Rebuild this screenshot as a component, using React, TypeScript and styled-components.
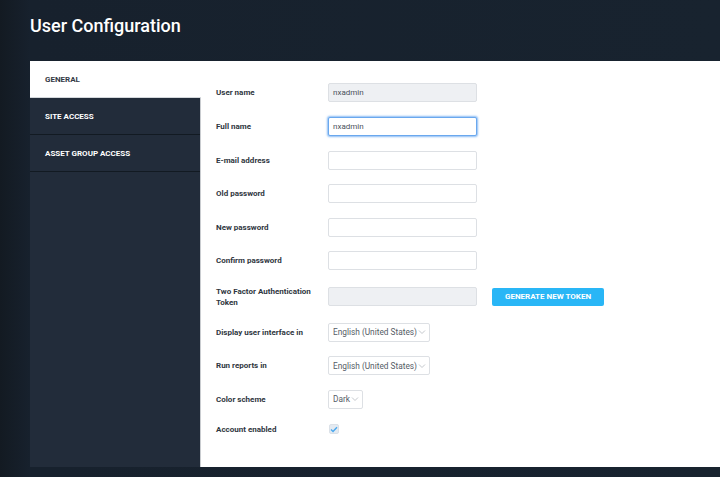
import React from 'react';
import styled, { createGlobalStyle } from 'styled-components';

const GlobalStyle = createGlobalStyle`
  html, body {
    margin: 0;
    padding: 0;
    background: #18222e;
  }
  body {
    font-family: Roboto, "Liberation Sans", sans-serif;
  }
`;

const Page = styled.div`
  width: 720px;
  height: 477px;
  overflow: hidden;
  background: linear-gradient(to right, #131a22 0px, #17212d 30px, #18232f 100%);
  display: flex;
  flex-direction: column;
`;

const Header = styled.header`
  height: 61px;
  padding: 15px 0 0 30px;
  box-sizing: border-box;
`;

const Title = styled.h1`
  margin: 0;
  font-size: 18px;
  font-weight: 500;
  color: #ffffff;
`;

const Panel = styled.div`
  display: flex;
  margin-left: 30px;
  height: 406px;
`;

const Sidebar = styled.nav`
  width: 170px;
  background: #222c3a;
  border-right: 1px solid #c9ccd0;
  display: flex;
  flex-direction: column;
`;

const Tab = styled.div<{ $active?: boolean }>`
  height: 37px;
  box-sizing: border-box;
  border-bottom: 1px solid ${(p) => (p.$active ? '#d4d8dc' : '#121a22')};
  margin-right: ${(p) => (p.$active ? '-1px' : '0')};
  background: ${(p) => (p.$active ? '#ffffff' : '#222c3a')};
  color: ${(p) => (p.$active ? '#333a44' : '#ffffff')};
  font-size: 8px;
  font-weight: 700;
  text-transform: uppercase;
  display: flex;
  align-items: center;
  padding-left: 15px;
`;

const Content = styled.section`
  flex: 1;
  background: #ffffff;
  padding: 15.2px 0 0 15px;
`;

const Row = styled.div<{ $h?: number }>`
  display: flex;
  align-items: center;
  height: ${(p) => p.$h ?? 33.6}px;
`;

const Label = styled.label`
  width: 112px;
  font-size: 8px;
  font-weight: 700;
  color: #2f3640;
  line-height: 11px;
`;

const Input = styled.div<{ $disabled?: boolean; $focus?: boolean }>`
  width: 149px;
  height: 19px;
  box-sizing: border-box;
  border-radius: 2px;
  border: 1px solid ${(p) => (p.$focus ? '#6aa8ee' : '#dde0e4')};
  box-shadow: ${(p) => (p.$focus ? '0 0 2px 1px rgba(90,160,240,0.7)' : 'none')};
  background: ${(p) => (p.$disabled ? '#eef0f3' : '#ffffff')};
  font-size: 8px;
  color: #4a515b;
  display: flex;
  align-items: center;
  padding-left: 4px;
`;

const Select = styled.div<{ $w: number }>`
  width: ${(p) => p.$w}px;
  height: 19px;
  box-sizing: border-box;
  border-radius: 2px;
  border: 1px solid #dde0e4;
  font-size: 8.3px;
  color: #555c66;
  display: flex;
  align-items: center;
  padding-left: 4px;
  gap: 1px;
  white-space: nowrap;
`;

const Chevron = () => (
  <svg width="8" height="6" viewBox="0 0 8 6">
    <path d="M1 1.5 L4 4.5 L7 1.5" fill="none" stroke="#c4c8cd" strokeWidth="1" />
  </svg>
);

const Button = styled.button`
  margin-left: 15px;
  width: 112px;
  height: 18px;
  border: none;
  border-radius: 2px;
  background: #29b6f6;
  color: #ffffff;
  font-family: Roboto, "Liberation Sans", sans-serif;
  font-size: 8px;
  font-weight: 700;
  padding: 0;
`;

const Check = styled.div`
  width: 10px;
  height: 10px;
  margin-left: 1px;
  border-radius: 2px;
  background: #e4eaf1;
  border: 1px solid #dbe1e8;
  box-sizing: border-box;
  display: flex;
  align-items: center;
  justify-content: center;
`;

export default function App() {
  return (
    <Page>
      <GlobalStyle />
      <Header>
        <Title>User Configuration</Title>
      </Header>
      <Panel>
        <Sidebar>
          <Tab $active>General</Tab>
          <Tab>Site Access</Tab>
          <Tab>Asset Group Access</Tab>
        </Sidebar>
        <Content>
          <Row>
            <Label>User name</Label>
            <Input $disabled>nxadmin</Input>
          </Row>
          <Row>
            <Label>Full name</Label>
            <Input $focus>nxadmin</Input>
          </Row>
          <Row>
            <Label>E-mail address</Label>
            <Input />
          </Row>
          <Row>
            <Label>Old password</Label>
            <Input />
          </Row>
          <Row>
            <Label>New password</Label>
            <Input />
          </Row>
          <Row>
            <Label>Confirm password</Label>
            <Input />
          </Row>
          <Row $h={37.6}>
            <Label>
              Two Factor Authentication
              <br />
              Token
            </Label>
            <Input $disabled />
            <Button>GENERATE NEW TOKEN</Button>
          </Row>
          <Row>
            <Label>Display user interface in</Label>
            <Select $w={102}>
              English (United States)
              <Chevron />
            </Select>
          </Row>
          <Row>
            <Label>Run reports in</Label>
            <Select $w={102}>
              English (United States)
              <Chevron />
            </Select>
          </Row>
          <Row>
            <Label>Color scheme</Label>
            <Select $w={35}>
              Dark <Chevron />
            </Select>
          </Row>
          <Row $h={26}>
            <Label>Account enabled</Label>
            <Check>
              <svg width="8" height="7" viewBox="0 0 8 7">
                <path d="M1 3.6 L3 5.5 L7 1.2" fill="none" stroke="#4aa8ee" strokeWidth="1.4" />
              </svg>
            </Check>
          </Row>
        </Content>
      </Panel>
    </Page>
  );
}
